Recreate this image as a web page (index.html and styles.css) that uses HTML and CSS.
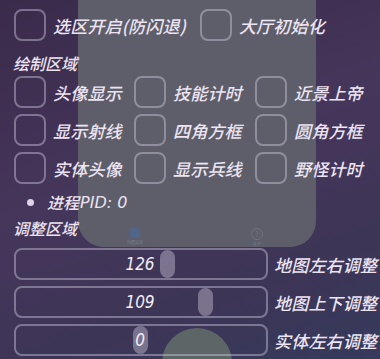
FILE: index.html
```html
<!DOCTYPE html>
<html lang="zh-CN">
<head>
    <meta charset="UTF-8">
    <title>菜单</title>
    <link rel="stylesheet" href="styles.css">
</head>
<body>
    <!-- background: phone preview behind the menu -->
    <div class="bg-panel">
        <div class="bg-tab tab-left"><span class="tab-icon square"></span><span class="tab-text">功能菜单</span></div>
        <div class="bg-tab tab-right"><span class="tab-icon ring">?</span><span class="tab-text">关于</span></div>
    </div>
    <div class="bg-circle"></div>

    <div class="menu">
        <div class="top-row">
            <label class="check"><span class="box"></span><span class="text">选区开启(防闪退)</span></label>
            <label class="check"><span class="box"></span><span class="text">大厅初始化</span></label>
        </div>

        <h2 class="section">绘制区域</h2>
        <div class="check-grid">
            <label class="check"><span class="box"></span><span class="text">头像显示</span></label>
            <label class="check"><span class="box"></span><span class="text">技能计时</span></label>
            <label class="check"><span class="box"></span><span class="text">近景上帝</span></label>
            <label class="check"><span class="box"></span><span class="text">显示射线</span></label>
            <label class="check"><span class="box"></span><span class="text">四角方框</span></label>
            <label class="check"><span class="box"></span><span class="text">圆角方框</span></label>
            <label class="check"><span class="box"></span><span class="text">实体头像</span></label>
            <label class="check"><span class="box"></span><span class="text">显示兵线</span></label>
            <label class="check"><span class="box"></span><span class="text">野怪计时</span></label>
        </div>

        <div class="pid"><span class="dot"></span>进程<span class="num">PID: 0</span></div>

        <h2 class="section adjust">调整区域</h2>
        <div class="sliders">
            <div class="slider-row">
                <div class="slider">
                    <span class="thumb" style="left: 144px"></span>
                    <span class="value">126</span>
                </div>
                <span class="text">地图左右调整</span>
            </div>
            <div class="slider-row">
                <div class="slider">
                    <span class="thumb" style="left: 182px"></span>
                    <span class="value">109</span>
                </div>
                <span class="text">地图上下调整</span>
            </div>
            <div class="slider-row">
                <div class="slider">
                    <span class="thumb" style="left: 117px"></span>
                    <span class="value">0</span>
                </div>
                <span class="text">实体左右调整</span>
            </div>
        </div>
    </div>
</body>
</html>
```

FILE: styles.css
```css
:root {
    --text-color: #ece4f2;
    --line-color: rgba(215, 210, 228, 0.42);
}

html, body {
    margin: 0;
    width: 380px;
    height: 359px;
    overflow: hidden;
}

body {
    position: relative;
    font-family: "Noto Sans CJK SC", "Noto Sans", sans-serif;
    color: var(--text-color);
    background: linear-gradient(160deg, #3a2b4b 0%, #45365b 45%, #3d3556 75%, #363a5c 100%);
}

/* Background decoration */
.bg-panel {
    position: absolute;
    left: 78px;
    top: 0;
    width: 238px;
    height: 247px;
    background: #5e5e6a;
    border-radius: 0 0 26px 26px;
}

.bg-tab {
    position: absolute;
    top: 228px;
    display: flex;
    flex-direction: column;
    align-items: center;
    gap: 2px;
    opacity: 0.45;
}

.tab-left { left: 49px; }
.tab-right { left: 173px; }

.tab-icon {
    width: 10px;
    height: 10px;
    font-size: 8px;
    line-height: 10px;
    text-align: center;
}

.tab-icon.square {
    background: #3f6fb0;
    border-radius: 2px;
}

.tab-icon.ring {
    border: 1px solid #8a8a96;
    border-radius: 50%;
    color: #8a8a96;
}

.tab-text {
    font-size: 4px;
    line-height: 5px;
    color: #8fa6c8;
}

/* only the top cap of the circle shows */
.bg-circle {
    position: absolute;
    left: 162px;
    top: 328px;
    width: 70px;
    height: 31px;
    clip-path: circle(35px at 35px 35px);
    background: #5d6666;
}

/* Menu */
.menu {
    position: relative;
    padding: 9px 0 0 14px;
}

.check {
    display: flex;
    align-items: center;
    gap: 7px;
}

.box {
    flex: none;
    width: 28px;
    height: 28px;
    border: 2px solid var(--line-color);
    border-radius: 8px;
}

.text {
    font-size: 17px;
    font-style: italic;
    font-weight: 500;
    letter-spacing: 0.2px;
    white-space: nowrap;
    color: var(--text-color);
}

.top-row {
    display: flex;
    gap: 14px;
}

.section {
    margin: 9px 0 0 -1px;
    height: 26px;
    font-size: 16px;
    font-style: italic;
    font-weight: 500;
    line-height: 26px;
}

.section.adjust {
    margin-top: 0;
}

.check-grid {
    display: grid;
    grid-template-columns: 120px 121px auto;
    row-gap: 6px;
}

.pid {
    display: flex;
    align-items: center;
    height: 26px;
    margin-top: 5px;
    padding-left: 13px;
    font-size: 16px;
    font-style: italic;
    font-weight: 500;
}

.dot {
    width: 7px;
    height: 7px;
    margin-right: 13px;
    border-radius: 50%;
    background: #ddd4e6;
}

.num {
    margin-left: 1px;
    font-family: "DejaVu Sans", sans-serif;
    font-size: 16px;
    font-style: italic;
}

.sliders {
    display: flex;
    flex-direction: column;
    gap: 6px;
    margin-top: 7px;
}

.slider-row {
    display: flex;
    align-items: center;
    gap: 6px;
}

.slider {
    position: relative;
    flex: none;
    width: 250px;
    height: 28px;
    border: 2px solid var(--line-color);
    border-radius: 8px;
}

.thumb {
    position: absolute;
    top: 0;
    width: 15px;
    height: 28px;
    border-radius: 8px;
    background: rgba(200, 190, 210, 0.45);
}

.value {
    position: relative;
    display: block;
    padding-right: 2px;
    text-align: center;
    font-family: "DejaVu Sans Condensed", "DejaVu Sans", sans-serif;
    font-size: 17px;
    font-style: italic;
    line-height: 28px;
    color: #f2eef6;
}
```
